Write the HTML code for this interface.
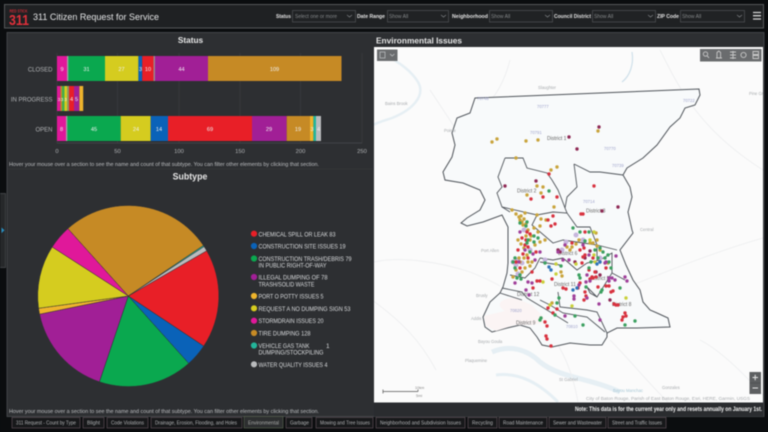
<!DOCTYPE html>
<html><head><meta charset="utf-8"><title>311 Citizen Request for Service</title>
<style>
html,body{margin:0;padding:0;background:#0b0d0f;width:768px;height:432px;overflow:hidden}
svg{display:block;filter:blur(.5px)}
text{font-family:"Liberation Sans",sans-serif}
</style></head><body>
<svg width="768" height="432" viewBox="0 0 768 432" xmlns="http://www.w3.org/2000/svg">
<rect width="768" height="432" fill="#0b0d0f"/>
<!-- header -->
<rect x="4.5" y="4.5" width="759" height="23.5" fill="#1f2123" stroke="#55585a"/>
<text x="9.5" y="12.3" font-size="4.6" font-weight="bold" fill="#c92a35" textLength="18" lengthAdjust="spacingAndGlyphs">RED STICK</text>
<text x="9" y="25" font-size="15" fill="#e0303a" font-weight="bold" textLength="20" lengthAdjust="spacingAndGlyphs">311</text>
<text x="33" y="20" font-size="9.5" fill="#e4e5e6" textLength="126" lengthAdjust="spacingAndGlyphs">311 Citizen Request for Service</text>
<g font-size="5" font-weight="bold" fill="#e2e2e2">
<text x="276" y="18" textLength="15" lengthAdjust="spacingAndGlyphs">Status</text>
<text x="357" y="18" textLength="28" lengthAdjust="spacingAndGlyphs">Date Range</text>
<text x="452" y="18" textLength="36" lengthAdjust="spacingAndGlyphs">Neighborhood</text>
<text x="554" y="18" textLength="37" lengthAdjust="spacingAndGlyphs">Council District</text>
<text x="657" y="18" textLength="22" lengthAdjust="spacingAndGlyphs">ZIP Code</text>
</g>
<g fill="#202224" stroke="#505356" stroke-width=".7">
<rect x="292.5" y="10.5" width="63" height="11.5"/>
<rect x="387.5" y="10.5" width="61" height="11.5"/>
<rect x="489.5" y="10.5" width="63" height="11.5"/>
<rect x="592.5" y="10.5" width="63" height="11.5"/>
<rect x="680.5" y="10.5" width="64" height="11.5"/>
</g>
<g font-size="5" fill="#85888a">
<text x="295" y="18" textLength="42" lengthAdjust="spacingAndGlyphs">Select one or more</text>
<text x="389" y="18">Show All</text>
<text x="491" y="18">Show All</text>
<text x="594" y="18">Show All</text>
<text x="682" y="18">Show All</text>
</g>
<g fill="none" stroke="#808386" stroke-width=".7">
<path d="M347 15l2.5 2 2.5-2M441 15l2.5 2 2.5-2M545 15l2.5 2 2.5-2M648 15l2.5 2 2.5-2M737 15l2.5 2 2.5-2"/>
</g>
<path d="M753 12.5h8M753 15.7h8M753 19h8" stroke="#d6d6d6" stroke-width="1.3"/>

<!-- sidebar tab -->
<rect x="-1" y="193.5" width="6.5" height="74" fill="#26282a" stroke="#505356" stroke-width=".7"/>
<path d="M1.5 227.5l3 2.8-3 2.8z" fill="#2a8fc0"/>

<!-- panels -->
<rect x="7" y="32" width="757" height="385" fill="#2d2f32"/>
<path d="M7 32.5H764V416.5H7Z" fill="none" stroke="#4a4d50" stroke-width=".8"/>
<text x="190.5" y="43" font-size="8.3" font-weight="bold" fill="#e6e6e6" text-anchor="middle">Status</text>
<text x="190" y="179.5" font-size="8.8" font-weight="bold" fill="#e6e6e6" text-anchor="middle">Subtype</text>
<text x="376" y="43.3" font-size="8.3" font-weight="bold" fill="#e6e6e6" textLength="86" lengthAdjust="spacingAndGlyphs">Environmental Issues</text>

<!-- bar chart grid -->
<g stroke="#3e4043" stroke-width=".6">
<path d="M117.5 53V143M179 53V143M240 53V143M300.5 53V143M362 53V143"/>
<path d="M57 53V143"/>
<path d="M57 143H362" stroke="#55585a"/>
</g>
<!-- closed -->
<g>
<rect x="57" y="56" width="10" height="25" fill="#e0189a"/><rect x="67" y="56" width="1.5" height="25" fill="#a5a5a5"/>
<rect x="68.3" y="56" width="36.7" height="25" fill="#0aa84f"/>
<rect x="105" y="56" width="33.4" height="25" fill="#d5cc1f"/>
<rect x="138.4" y="56" width="3.8" height="25" fill="#0a62b8"/>
<rect x="142.2" y="56" width="11.3" height="25" fill="#e81f27"/>
<rect x="153.5" y="56" width="1.5" height="25" fill="#9a8a8a"/>
<rect x="155" y="56" width="53" height="25" fill="#a11f96"/>
<rect x="208" y="56" width="133.5" height="25" fill="#c68a25"/>
</g>
<!-- progress -->
<g>
<rect x="57" y="86" width="3.4" height="25" fill="#e0189a"/>
<rect x="60.4" y="86" width="1.6" height="25" fill="#c68a25"/>
<rect x="62" y="86" width="2.4" height="25" fill="#3fb04f"/>
<rect x="64.4" y="86" width="2.6" height="25" fill="#d5cc1f"/>
<rect x="67" y="86" width="2" height="25" fill="#8a9a60"/>
<rect x="69" y="86" width="5" height="25" fill="#e81f27"/>
<rect x="74" y="86" width="5.4" height="25" fill="#a11f96"/>
<rect x="79.4" y="86" width="3.8" height="25" fill="#eeb42c"/>
</g>
<!-- open -->
<g>
<rect x="57" y="116" width="9" height="25" fill="#e0189a"/><rect x="66" y="116" width="1.5" height="25" fill="#a5a5a5"/>
<rect x="67.3" y="116" width="53.4" height="25" fill="#0aa84f"/>
<rect x="120.7" y="116" width="30" height="25" fill="#d5cc1f"/>
<rect x="150.7" y="116" width="17.3" height="25" fill="#0a62b8"/>
<rect x="168" y="116" width="84" height="25" fill="#e81f27"/>
<rect x="252" y="116" width="34.7" height="25" fill="#a11f96"/>
<rect x="286.7" y="116" width="23.3" height="25" fill="#c68a25"/>
<rect x="310" y="116" width="3.4" height="25" fill="#eeb42c"/>
<rect x="313.4" y="116" width="2.7" height="25" fill="#23b59a"/>
<rect x="316" y="116" width="5" height="25" fill="#b9bbbd"/>
</g>
<g font-size="5.6" fill="#f0f0f0" text-anchor="middle">
<text x="62" y="71">9</text><text x="86.5" y="71">31</text><text x="121.5" y="71">27</text><text x="140.5" y="71">3</text><text x="148" y="71">10</text><text x="181.5" y="71">44</text><text x="274.5" y="71">109</text>
<text x="59" y="101" font-size="4.6">3</text><text x="62" y="101" font-size="4.6">3</text><text x="65.5" y="101" font-size="4.6">3</text><text x="71.5" y="101">4</text><text x="76.5" y="101">5</text>
<text x="61.5" y="131">8</text><text x="94" y="131">45</text><text x="136" y="131">24</text><text x="159" y="131">14</text><text x="210" y="131">69</text><text x="269" y="131">29</text><text x="298" y="131">19</text><text x="312" y="131">3</text><text x="318.5" y="131">4</text>
</g>
<g font-size="6" fill="#b0b2b4" text-anchor="end">
<text x="52.5" y="71.5">CLOSED</text>
<text x="52.5" y="101.5">IN PROGRESS</text>
<text x="52.5" y="131.5">OPEN</text>
</g>
<g font-size="5.8" fill="#b0b2b4" text-anchor="middle">
<text x="57" y="153">0</text><text x="117.5" y="153">50</text><text x="179" y="153">100</text><text x="240" y="153">150</text><text x="300.5" y="153">200</text><text x="362" y="153">250</text>
</g>
<text x="9" y="166" font-size="5.6" fill="#bcbec0" textLength="310" lengthAdjust="spacingAndGlyphs">Hover your mouse over a section to see the name and count of that subtype.  You can filter other elements by clicking that section.</text>
<path d="M8 169H373" stroke="#3a3c3f" stroke-width=".6"/>

<!-- pie -->
<g stroke="#2d2f32" stroke-width=".5">
<path d="M128.3 296L206.7 250.75A90.5 90.5 0 0 1 203.7 346.1Z" fill="#e81f27"/>
<path d="M128.3 296L203.7 346.1A90.5 90.5 0 0 1 188.7 363.4Z" fill="#0a62b8"/>
<path d="M128.3 296L188.7 363.4A90.5 90.5 0 0 1 99.4 381.8Z" fill="#0aa84f"/>
<path d="M128.3 296L99.4 381.8A90.5 90.5 0 0 1 39.6 314.2Z" fill="#a11f96"/>
<path d="M128.3 296L39.6 314.2A90.5 90.5 0 0 1 38.6 308.3Z" fill="#eeb42c"/>
<path d="M128.3 296L38.6 308.3A90.5 90.5 0 0 1 52.2 247Z" fill="#d5cc1f"/>
<path d="M128.3 296L52.2 247A90.5 90.5 0 0 1 67.9 228.6Z" fill="#e0189a"/>
<path d="M128.3 296L67.9 228.6A90.5 90.5 0 0 1 203.4 245.5Z" fill="#c68a25"/>
<path d="M128.3 296L203.4 245.5A90.5 90.5 0 0 1 204.1 246.6Z" fill="#23b59a"/>
<path d="M128.3 296L204.1 246.6A90.5 90.5 0 0 1 206.7 250.75Z" fill="#b9bbbd"/>
</g>
<!-- legend -->
<g>
<circle cx="254" cy="233.7" r="3.1" fill="#e81f27"/>
<circle cx="254" cy="246" r="3.1" fill="#0a62b8"/>
<circle cx="254" cy="258.5" r="3.1" fill="#0aa84f"/>
<circle cx="254" cy="277" r="3.1" fill="#a11f96"/>
<circle cx="254" cy="296" r="3.1" fill="#eeb42c"/>
<circle cx="254" cy="308.3" r="3.1" fill="#d5cc1f"/>
<circle cx="254" cy="320.7" r="3.1" fill="#e0189a"/>
<circle cx="254" cy="333" r="3.1" fill="#c68a25"/>
<circle cx="254" cy="345.5" r="3.1" fill="#23b59a"/>
<circle cx="254" cy="364.3" r="3.1" fill="#b9bbbd"/>
</g>
<g font-size="6.4" fill="#d8dadc">
<text x="258.5" y="236.3" textLength="77" lengthAdjust="spacingAndGlyphs">CHEMICAL SPILL OR LEAK 83</text>
<text x="258.5" y="248.6" textLength="87" lengthAdjust="spacingAndGlyphs">CONSTRUCTION SITE ISSUES 19</text>
<text x="258.5" y="261" textLength="93" lengthAdjust="spacingAndGlyphs">CONSTRUCTION TRASH/DEBRIS 79</text>
<text x="258.5" y="267.5" textLength="68" lengthAdjust="spacingAndGlyphs">IN PUBLIC RIGHT-OF-WAY</text>
<text x="258.5" y="279.6" textLength="69" lengthAdjust="spacingAndGlyphs">ILLEGAL DUMPING OF  78</text>
<text x="258.5" y="286.3" textLength="56" lengthAdjust="spacingAndGlyphs">TRASH/SOLID WASTE</text>
<text x="258.5" y="298.6" textLength="65" lengthAdjust="spacingAndGlyphs">PORT O POTTY ISSUES 5</text>
<text x="258.5" y="310.9" textLength="92" lengthAdjust="spacingAndGlyphs">REQUEST A NO DUMPING SIGN 53</text>
<text x="258.5" y="323.2" textLength="65" lengthAdjust="spacingAndGlyphs">STORMDRAIN ISSUES 20</text>
<text x="258.5" y="335.6" textLength="52" lengthAdjust="spacingAndGlyphs">TIRE DUMPING 128</text>
<text x="258.5" y="348" textLength="51" lengthAdjust="spacingAndGlyphs">VEHICLE GAS TANK</text>
<text x="326" y="348">1</text>
<text x="258.5" y="354.7" textLength="65" lengthAdjust="spacingAndGlyphs">DUMPING/STOCKPILING</text>
<text x="258.5" y="366.9" textLength="69" lengthAdjust="spacingAndGlyphs">WATER QUALITY ISSUES 4</text>
</g>
<text x="9" y="413" font-size="5.6" fill="#bcbec0" textLength="310" lengthAdjust="spacingAndGlyphs">Hover your mouse over a section to see the name and count of that subtype.  You can filter other elements by clicking that section.</text>

<!-- map -->
<clipPath id="m"><rect x="374" y="47" width="389" height="355.5"/></clipPath>
<rect x="374" y="47" width="389" height="355.5" fill="#fbfbfb"/>
<g clip-path="url(#m)">
<g fill="none" stroke="#e6eff4" stroke-width="2.5">
<path d="M384 55C400 62 412 72 418 82C426 96 412 110 392 118C380 122 372 124 370 128"/>
<path d="M492 352C510 344 528 350 540 362C560 378 590 378 620 392" stroke-width="5"/>
<path d="M496 375C520 372 540 384 558 402" stroke-width="3"/>
<path d="M632 52C634 64 630 76 622 82" stroke="#cfe0ea" stroke-width="1.2"/>
</g>
<g fill="none" stroke="#eeeff0" stroke-width=".9">
<path d="M374 262C400 256 440 262 470 272C480 276 490 280 500 286"/>
<path d="M620 290C670 270 720 250 763 238"/>
<path d="M610 340C630 360 650 385 668 402"/>
<path d="M430 90C450 120 470 150 490 185M372 300C400 320 420 340 436 370"/>
<path d="M660 50C680 90 700 130 763 170M510 60C505 80 495 100 480 110"/>
<path d="M558 345C570 365 575 385 578 402M700 340C720 350 745 375 763 395"/>
</g>
<path d="M475 98L699 89L700 95L695 105L685 108L680 118L670 127L657 145L643 158L627 168L623 175L630 187L632 197L628 212L632 230L633 233L620 250L626 265L633 280L640 290L643 302L650 310L657 313L668 318L670 327L637 328L617 328L607 333L607 337L602 345L590 345L570 343L552 347L542 345L537 337L530 328L520 325L507 328L492 332L485 327L483 317L490 302L500 293L503 287L507 273L508 263L508 227L502 215L483 222L467 226L461 223L467 218L480 210L485 200L480 190L463 183L445 180L443 172L452 157L455 145L452 133L457 118L470 113Z" fill="#f8fafb" stroke="#4f545a" stroke-width="1"/>
<path d="M505 311C495 305 500 298 515 298L532 305L548 322L532 325L515 325L496 331L486 326L484 316Z" fill="#fbf4f4"/>
<g fill="none" stroke="#4f545a" stroke-width=".9">
<path d="M505 158L523 158L527 168L547 173L552 180L558 190L562 200L565 208"/>
<path d="M505 158L498 177L502 187L497 193L502 207L510 212"/>
<path d="M502 207L537 215L553 212L567 213L577 227L590 227L597 245L617 250"/>
<path d="M574 164L590 172L600 172L623 175M574 164L577 187L567 197L565 208L567 213"/>
<path d="M537 215L532 225L553 243L563 240L597 245"/>
<path d="M563 258L577 270L587 263L600 260L612 253L612 273L597 297L587 287L590 293L597 297"/>
<path d="M540 258L553 260L563 258M540 258L535 268L525 278L510 275"/>
<path d="M558 292L560 307L587 310L597 312L607 333"/>
<path d="M502 288L522 292L527 298L547 310L568 323"/>
<path d="M500 293L522 300M540 300L550 305L563 313L587 317L605 332"/>
<path d="M540 262L560 265M597 245L597 260M612 273L625 280"/>
</g>
<!-- labels -->
<g font-size="5" fill="#70787f">
<text x="547" y="140" font-size="5" fill="#666">District 1</text>
<text x="517" y="192.5" font-size="5" fill="#666">District 2</text>
<text x="586" y="212.5" font-size="5" fill="#666">District 3</text>
<text x="517" y="296" font-size="5" fill="#666">District 12</text>
<text x="516" y="324.5" font-size="5" fill="#666">District 9</text>
<text x="554" y="286" font-size="5" fill="#666">District 11</text>
<text x="612" y="306" font-size="5" fill="#666">District 8</text>
<text x="558" y="255" font-size="5" fill="#666">District 6</text>
<text x="590" y="280" font-size="5" fill="#666">District 5</text>
<g fill="#a0a4cc" font-size="4.2">
<text x="530" y="134">70791</text><text x="604" y="150">70770</text><text x="612" y="167">70739</text><text x="583" y="203">70714</text><text x="510" y="312">70820</text><text x="566" y="328">70810</text><text x="477" y="100">70748</text><text x="683" y="102">70722</text><text x="537" y="108">70777</text>
</g>
<g fill="#a8abae" font-size="4.2">
<text x="538" y="89">Slaughter</text><text x="481" y="252">Port Allen</text><text x="476" y="297">Brusly</text><text x="471" y="320">Addis</text><text x="465" y="362">Plaquemine</text><text x="478" y="343">Bayou Goula</text><text x="559" y="381">St Gabriel</text><text x="640" y="231">Central</text><text x="749" y="95">Pine Grove</text><text x="385" y="105">Bains Brook</text><text x="444" y="132">Pointe</text><text x="662" y="389">Gonzales</text><text x="613" y="392" fill="#a8c8d6">Bayou Manchac</text>
</g>
</g>
<!-- dots -->
<g fill="none" stroke-linecap="round" stroke-width="3.4">
<path stroke="#c7b6dd" stroke-width="5" d="M516 265h0M522 263h0M518 260h0M545 260h0M576 235h0M583 240h0M566 242h0M518 274h0M513 262h0M530 250h0M524 230h0M562 250h0M600 258h0"/>
<path stroke="#8f2a55" d="M599 127h0M569 137h0M577 149h0M618 207h0M602 211h0M505 186h0M536 181h0M600 275h0M585 258h0M560 252h0M610 300h0M596 272h0M558 250h0M590 251h0M575 262h0"/>
<path stroke="#c9a43c" d="M492 142h0M497 139h0M526 141h0M538 140h0M598 131h0M516 158h0M557 167h0M551 170h0M537 186h0M543 187h0M527 195h0M541 193h0M525 213h0M554 207h0M512 210h0M516 214h0M520 220h0M523 225h0M526 224h0M528 230h0M537 215h0M546 220h0M540 226h0M538 232h0M530 240h0M518 240h0M524 248h0M535 245h0M540 242h0M545 240h0M596 233h0M590 243h0M600 250h0M576 244h0M527 255h0M520 262h0M516 270h0M513 277h0M525 268h0M532 262h0M562 276h0M561 272h0M552 303h0M608 263h0M593 243h0M567 247h0M579 240h0M521 216h0M524 219h0M522 222h0M519 217h0M526 236h0M531 236h0M521 244h0M524 258h0M528 262h0M530 266h0M522 272h0M519 258h0M534 228h0M541 219h0M597 240h0M570 250h0M572 247h0M597 246h0"/>
<path stroke="#d8323f" d="M549 174h0M594 186h0M543 197h0M557 197h0M531 199h0M583 214h0M581 214h0M548 220h0M553 216h0M555 224h0M551 226h0M527 232h0M522 238h0M530 234h0M525 245h0M536 252h0M528 258h0M520 268h0M532 272h0M537 281h0M552 279h0M566 289h0M563 288h0M578 288h0M590 279h0M593 278h0M596 277h0M580 283h0M585 292h0M586 296h0M584 300h0M598 287h0M611 292h0M613 291h0M614 304h0M618 305h0M616 305h0M623 317h0M626 316h0M625 313h0M622 320h0M547 326h0M546 336h0M547 339h0M551 346h0M545 322h0M548 308h0M553 313h0M557 309h0M583 257h0M593 258h0M585 232h0M572 243h0M533 288h0M540 281h0M526 240h0M528 247h0M518 250h0M523 254h0M516 262h0M585 255h0M595 272h0M592 277h0M589 270h0M582 263h0M606 286h0M609 286h0M606 268h0M580 250h0M584 248h0"/>
<path stroke="#3ca060" d="M549 191h0M520 223h0M527 222h0M534 236h0M538 238h0M573 228h0M580 232h0M589 232h0M585 241h0M595 250h0M598 258h0M605 258h0M589 268h0M580 278h0M579 275h0M545 263h0M561 266h0M515 258h0M513 262h0M520 275h0M517 278h0M528 240h0M540 320h0M541 318h0M555 315h0M575 316h0M583 325h0M635 321h0M625 325h0M559 298h0M557 303h0M611 268h0M608 255h0M620 288h0M602 290h0M586 287h0M601 292h0M527 243h0M530 252h0M515 268h0M521 279h0M526 226h0M534 242h0M603 252h0M600 248h0M609 262h0M591 262h0"/>
<path stroke="#a0409a" d="M520 232h0M558 252h0M563 260h0M569 260h0M565 245h0M583 245h0M589 255h0M600 262h0M605 263h0M612 278h0M609 278h0M625 277h0M627 281h0M586 282h0M579 285h0M587 275h0M525 250h0M533 254h0M540 252h0M519 262h0M528 282h0M515 283h0M526 290h0M529 295h0M532 283h0M574 296h0M574 299h0M590 281h0M599 304h0M587 298h0M565 316h0M600 320h0M615 280h0M616 256h0M609 281h0M606 262h0M535 260h0"/>
<path stroke="#c9d03a" d="M543 282h0M550 305h0M576 264h0M594 255h0M594 232h0M590 240h0M556 264h0M556 274h0M626 298h0M572 306h0M595 262h0"/>
<path stroke="#2e74b8" d="M549 267h0M551 270h0M573 290h0M577 288h0M597 264h0M600 262h0"/>
</g>
<!-- scale -->
<path d="M383 389.5V393.5M383 391.5H418" stroke="#555" stroke-width=".7" fill="none"/>
<path d="M418 389.5V391.5" stroke="#555" stroke-width=".7"/>
<text x="415" y="389" font-size="3.8" fill="#888">10km</text>
<text x="416" y="397" font-size="3.8" fill="#888">5mi</text>
<text x="586" y="400" font-size="4.4" fill="#a8abae" textLength="164" lengthAdjust="spacingAndGlyphs">City of Baton Rouge, Parish of East Baton Rouge, Esri, HERE, Garmin, USGS</text>
</g>
<!-- map widgets -->
<rect x="377" y="49.5" width="20.5" height="11.5" fill="#6a6c6e"/>
<rect x="380" y="52" width="5" height="6" fill="none" stroke="#c4c6c8" stroke-width=".7"/>
<path d="M390 54l2.2 2 2.2-2" fill="none" stroke="#c4c6c8" stroke-width=".7"/>
<rect x="700" y="49" width="61.5" height="12.5" fill="#6a6c6e"/>
<g fill="none" stroke="#c8c8c8" stroke-width=".9">
<circle cx="705.5" cy="54" r="2.2"/><path d="M707 55.7l2 2.2"/>
<path d="M717 58V52.5l1.8-1.5 1.8 1.5V58ZM716 58h6"/>
<path d="M730 52h6M730 55h6M730 58h6M733 51v8"/>
<circle cx="743.5" cy="55" r="2.6"/>
<path d="M753 51.5h5.5v3h-5.5zM753 55.5h5.5v3h-5.5z"/>
</g>
<rect x="749.5" y="372" width="11.5" height="22" fill="#5d5f61"/>
<path d="M752.5 377.5h5.5M755.2 374.8v5.5M752.5 388h5.5" stroke="#e6e6e6" stroke-width="1"/>
<path d="M750 383h10.5" stroke="#484a4c" stroke-width=".6"/>
<!-- note -->
<rect x="374" y="402.5" width="389.5" height="14" fill="#2a2c2f"/>
<text x="575" y="411" font-size="6" font-weight="bold" fill="#f2f2f2" textLength="187" lengthAdjust="spacingAndGlyphs">Note: This data is for the current year only and resets annually on January 1st.</text>
<!-- tabs -->
<g fill="#17181a" stroke="#5c4e56" stroke-width=".7">
<rect x="12" y="417.5" width="68" height="10.5"/>
<rect x="83" y="417.5" width="21" height="10.5"/>
<rect x="107" y="417.5" width="41" height="10.5"/>
<rect x="151" y="417.5" width="91" height="10.5"/>
<rect x="286" y="417.5" width="26" height="10.5"/>
<rect x="316" y="417.5" width="57" height="10.5"/>
<rect x="376" y="417.5" width="89" height="10.5"/>
<rect x="468" y="417.5" width="29" height="10.5"/>
<rect x="499" y="417.5" width="48" height="10.5"/>
<rect x="549" y="417.5" width="57" height="10.5"/>
<rect x="608" y="417.5" width="58" height="10.5"/>
</g>
<rect x="244" y="416.5" width="39" height="11.5" fill="#2d2f30" stroke="#56604e" stroke-width=".7"/>
<g font-size="5" fill="#b0b2b4">
<text x="16" y="424.5" textLength="60" lengthAdjust="spacingAndGlyphs">311 Request - Count by Type</text>
<text x="87" y="424.5" textLength="13" lengthAdjust="spacingAndGlyphs">Blight</text>
<text x="111" y="424.5" textLength="33" lengthAdjust="spacingAndGlyphs">Code Violations</text>
<text x="155" y="424.5" textLength="82" lengthAdjust="spacingAndGlyphs">Drainage, Erosion, Flooding, and Holes</text>
<text x="248" y="424.5" textLength="31" fill="#a8aaa8" lengthAdjust="spacingAndGlyphs">Environmental</text>
<text x="290" y="424.5" textLength="19" lengthAdjust="spacingAndGlyphs">Garbage</text>
<text x="320" y="424.5" textLength="50" lengthAdjust="spacingAndGlyphs">Mowing and Tree Issues</text>
<text x="380" y="424.5" textLength="81" lengthAdjust="spacingAndGlyphs">Neighborhood and Subdivision Issues</text>
<text x="472" y="424.5" textLength="21" lengthAdjust="spacingAndGlyphs">Recycling</text>
<text x="503" y="424.5" textLength="40" lengthAdjust="spacingAndGlyphs">Road Maintenance</text>
<text x="553" y="424.5" textLength="49" lengthAdjust="spacingAndGlyphs">Sewer and Wastewater</text>
<text x="612" y="424.5" textLength="50" lengthAdjust="spacingAndGlyphs">Street and Traffic Issues</text>
</g>
</svg>
</body></html>
